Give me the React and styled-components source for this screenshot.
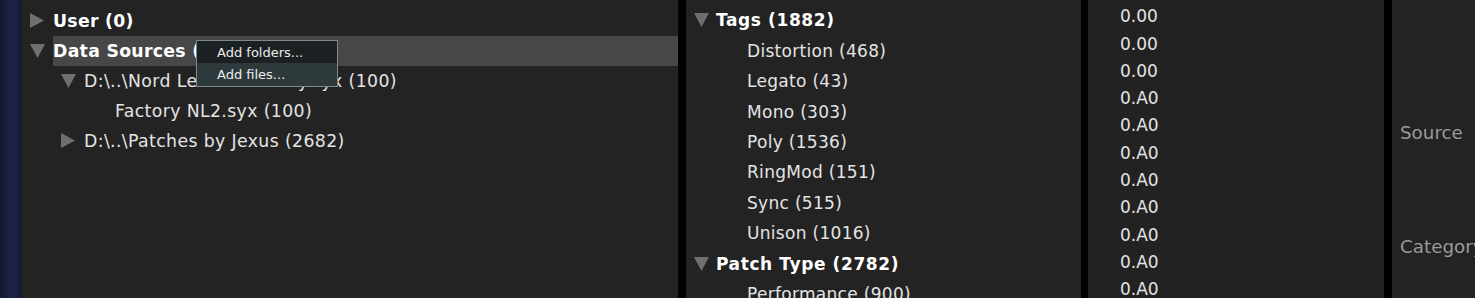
import React from "react";
import styled, { createGlobalStyle } from "styled-components";

const Global = createGlobalStyle`
  html, body { margin: 0; padding: 0; background: #232323; }
  body { font-family: "DejaVu Sans", Verdana, sans-serif; }
`;

const Shell = styled.div`
  display: flex;
  height: 298px;
  width: 1475px;
  overflow: hidden;
  background: #000;
`;

const Strip = styled.div`
  width: 22px;
  flex: none;
  background: linear-gradient(90deg, #15182c 0%, #1b2044 40%, #1c2149 70%, #15182e 100%);
`;

const Panel = styled.div`
  position: relative;
  flex: none;
  width: ${(p) => p.$w}px;
  margin-right: ${(p) => p.$gap || 0}px;
  background: ${(p) => p.$bg || "#232323"};
  padding-top: ${(p) => p.$top || 0}px;
  box-sizing: border-box;
  overflow: hidden;
`;

const Row = styled.div`
  display: flex;
  align-items: center;
  height: ${(p) => p.$h}px;
  padding-left: ${(p) => p.$indent}px;
  white-space: nowrap;
`;

const Toggle = styled.div`
  width: ${(p) => p.$w}px;
  flex: none;
  display: flex;
  align-items: center;
`;

const Arrow = styled.svg`
  display: block;
  fill: #6f6f6f;
`;

const Label = styled.div`
  flex: 1;
  align-self: stretch;
  display: flex;
  align-items: center;
  font-size: ${(p) => p.$size}px;
  letter-spacing: ${(p) => p.$track}px;
  color: ${(p) => (p.$bold ? "#ffffff" : "#e4e4e4")};
  font-weight: ${(p) => (p.$bold ? 700 : 400)};
  background: ${(p) => (p.$selected ? "#474747" : "transparent")};
`;

const Menu = styled.div`
  position: absolute;
  left: 174px;
  top: 40px;
  width: 142px;
  border: 1px solid #7d8a8b;
  box-sizing: border-box;
  background: #2e393b;
`;

const MenuItem = styled.div`
  height: ${(p) => p.$h}px;
  display: flex;
  align-items: center;
  padding-left: 20px;
  font-size: 13px;
  color: #ececec;
  background: ${(p) => (p.$hover ? "#1b2123" : "#2e393b")};
`;

const Value = styled.div`
  height: 27.3px;
  display: flex;
  align-items: center;
  padding-left: 32px;
  font-size: 17px;
  color: #e4e4e4;
`;

const Field = styled.div`
  position: absolute;
  left: 8px;
  top: ${(p) => p.$y}px;
  font-size: 18.3px;
  color: #9a9a9a;
  white-space: nowrap;
  transform: translateY(-50%);
`;

const Right = () => (
  <Arrow width="15" height="15" viewBox="0 0 15 15">
    <polygon points="0,0 14,7.5 0,15" />
  </Arrow>
);
const Down = () => (
  <Arrow width="15" height="14" viewBox="0 0 15 14">
    <polygon points="0,0 15,0 7.5,14" />
  </Arrow>
);

function TreeRow({ level, base, step, toggleW, h, size, track, boldTrack, kind, bold, selected, children }) {
  return (
    <Row $h={h} $indent={base + level * step}>
      <Toggle $w={toggleW}>
        {kind === "open" ? <Down /> : kind === "closed" ? <Right /> : null}
      </Toggle>
      <Label $bold={bold} $selected={selected} $size={size} $track={bold ? boldTrack : track}>
        {children}
      </Label>
    </Row>
  );
}

const sources = [
  { level: 0, kind: "closed", bold: true, text: "User (0)" },
  { level: 0, kind: "open", bold: true, selected: true, text: "Data Sources (2782)" },
  { level: 1, kind: "open", text: "D:\\..\\Nord Lead 2 Factory.syx (100)" },
  { level: 2, kind: "leaf", text: "Factory NL2.syx (100)" },
  { level: 1, kind: "closed", text: "D:\\..\\Patches by Jexus (2682)" },
];

const tags = [
  { level: 0, kind: "open", bold: true, text: "Tags (1882)" },
  { level: 1, kind: "leaf", text: "Distortion (468)" },
  { level: 1, kind: "leaf", text: "Legato (43)" },
  { level: 1, kind: "leaf", text: "Mono (303)" },
  { level: 1, kind: "leaf", text: "Poly (1536)" },
  { level: 1, kind: "leaf", text: "RingMod (151)" },
  { level: 1, kind: "leaf", text: "Sync (515)" },
  { level: 1, kind: "leaf", text: "Unison (1016)" },
  { level: 0, kind: "open", bold: true, text: "Patch Type (2782)" },
  { level: 1, kind: "leaf", text: "Performance (900)" },
];

const values = ["0.00", "0.00", "0.00", "0.A0", "0.A0", "0.A0", "0.A0", "0.A0", "0.A0", "0.A0", "0.A0"];

export default function App() {
  return (
    <>
      <Global />
      <Shell>
        <Strip />
        <Panel $w={656} $gap={8} $top={5.5}>
          {sources.map((r, i) => (
            <TreeRow key={i} level={r.level} base={8} step={31} toggleW={23} h={30.1} size={17.3} track={0.38} boldTrack={0.3} kind={r.kind} bold={r.bold} selected={r.selected}>
              {r.text}
            </TreeRow>
          ))}
          <Menu>
            <MenuItem $h={22} $hover>Add folders...</MenuItem>
            <MenuItem $h={23}>Add files...</MenuItem>
          </Menu>
        </Panel>
        <Panel $w={395} $gap={7} $top={5.3}>
          {tags.map((r, i) => (
            <TreeRow key={i} level={r.level} base={8} step={31} toggleW={22} h={30.4} size={17} track={0.3} boldTrack={0.6} kind={r.kind} bold={r.bold}>
              {r.text}
            </TreeRow>
          ))}
        </Panel>
        <Panel $w={296} $gap={8} $top={2.6} $bg="#222222">
          {values.map((v, i) => (
            <Value key={i}>{v}</Value>
          ))}
        </Panel>
        <Panel $w={83} $bg="#232323">
          <Field $y={132}>Source</Field>
          <Field $y={246}>Category</Field>
        </Panel>
      </Shell>
    </>
  );
}
